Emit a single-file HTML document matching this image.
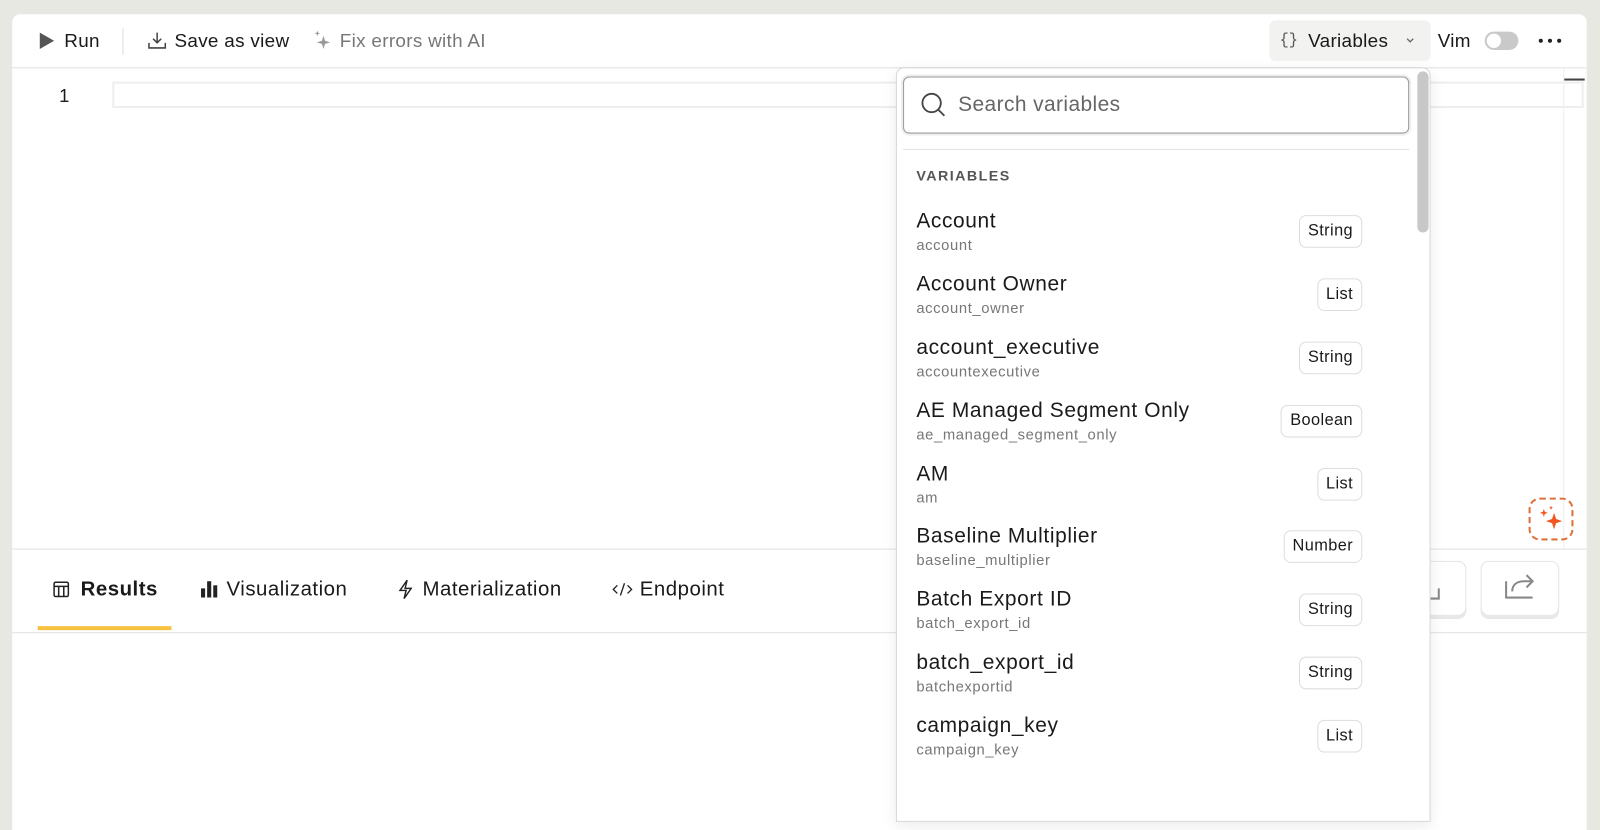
<!DOCTYPE html>
<html><head><meta charset="utf-8"><style>
*{box-sizing:border-box;margin:0;padding:0}
html,body{width:1600px;height:775px;overflow:hidden;background:#e8e8e3;font-family:"Liberation Sans",sans-serif;color:#1a1a1a}
#w{position:absolute;left:0;top:0;width:1568px;height:800px;transform:scale(1.0204,1.0197);transform-origin:0 0}
.a{position:absolute}
.card{left:12px;top:14px;width:1543px;height:800px;background:#fff;border-radius:8px 8px 0 0}
.tb{font-size:18.5px;top:29px;white-space:nowrap;letter-spacing:.3px}
.tab{font-size:20px;top:567px;white-space:nowrap;letter-spacing:.5px}
.name{font-size:20.5px;left:898px;letter-spacing:.6px;white-space:nowrap}
.sub{font-size:14.5px;color:#777;left:898px;letter-spacing:.6px;white-space:nowrap}
.badge{height:32px;border:1px solid #ddd;border-radius:7px;font-size:16px;padding:0 8px;line-height:30px;right:233px;letter-spacing:.4px}
</style></head><body><div id="w">
<div class="a card"></div>
<!-- toolbar -->
<div class="a" style="left:12px;top:66px;width:1543px;height:1px;background:#e2e2e2"></div>
<svg class="a" style="left:38px;top:31px" width="16" height="18"><path d="M1 1L15 9L1 17Z" fill="#555"/></svg>
<div class="a tb" style="left:63px">Run</div>
<div class="a" style="left:120px;top:28px;width:1px;height:26px;background:#ddd"></div>
<svg class="a" style="left:145px;top:31px" width="18" height="18" fill="none" stroke="#444" stroke-width="1.5"><path d="M9 1v10M5 7l4 4 4-4M1 11v5h16v-5"/></svg>
<div class="a tb" style="left:171px">Save as view</div>
<svg class="a" style="left:306px;top:29px" width="20" height="22" fill="#999"><path d="M11 6l1.5 5 5 1.5-5 1.5-1.5 5-1.5-5-5-1.5 5-1.5z"/><path d="M5 1l.7 2 2 .7-2 .7L5 6.5 4.3 4.4l-2-.7 2-.7z"/></svg>
<div class="a tb" style="left:333px;color:#777">Fix errors with AI</div>
<div class="a" style="left:1244px;top:20px;width:158px;height:40px;background:#f2f2f0;border-radius:6px"></div>
<div class="a tb" style="left:1254px;font-family:'Liberation Mono',monospace;font-size:15px;top:31px;color:#555;letter-spacing:0">{}</div>
<div class="a tb" style="left:1282px">Variables</div>
<svg class="a" style="left:1377px;top:36px" width="10" height="8" fill="none" stroke="#666" stroke-width="1.3"><path d="M2 2l3 3 3-3"/></svg>
<div class="a tb" style="left:1409px">Vim</div>
<div class="a" style="left:1455px;top:31px;width:33px;height:18px;background:#c9c9c9;border-radius:9px"></div>
<div class="a" style="left:1457px;top:33px;width:14px;height:14px;background:#fff;border-radius:50%"></div>
<div class="a" style="left:1508px;top:38px;width:4px;height:4px;background:#222;border-radius:50%;box-shadow:9px 0 #222,18px 0 #222"></div>
<!-- editor -->
<div class="a" style="left:58px;top:84px;font-size:18px">1</div>
<div class="a" style="left:110px;top:80px;width:1442px;height:26px;border:2px solid #eee"></div>
<div class="a" style="left:1532px;top:67px;width:1px;height:471px;background:#eee"></div>
<div class="a" style="left:1533px;top:77px;width:20px;height:2px;background:#444"></div>
<div class="a" style="left:1498px;top:488px;width:44px;height:42px;border:2px dashed #e0703a;border-radius:11px"></div>
<svg class="a" style="left:1506px;top:494px" width="30" height="30" fill="#f0561d"><path d="M17 9l2 6 6 2-6 2-2 6-2-6-6-2 6-2z"/><path d="M7 5l1 3 3 1-3 1-1 3-1-3-3-1 3-1z"/><path d="M14 2l.6 1.4 1.4.6-1.4.6L14 6l-.6-1.4L12 4l1.4-.6z"/></svg>
<div class="a" style="left:12px;top:538px;width:1543px;height:1px;background:#e2e2e2"></div>
<!-- tabs -->
<svg class="a" style="left:52px;top:570px" width="16" height="16" fill="none" stroke="#222" stroke-width="1.5"><rect x="1" y="1" width="14" height="14" rx="1.5"/><path d="M1 5h14M5.5 5v10M10.5 5v10"/></svg>
<div class="a tab" style="left:79px;font-weight:bold">Results</div>
<svg class="a" style="left:197px;top:569px" width="16" height="17" fill="#222"><rect x="0" y="8" width="4" height="9"/><rect x="6" y="1" width="4" height="16"/><rect x="12" y="5" width="4" height="12"/></svg>
<div class="a tab" style="left:222px">Visualization</div>
<svg class="a" style="left:390px;top:568px" width="14" height="20" fill="none" stroke="#222" stroke-width="1.4"><path d="M9 1L2 11h6l-2 8 7-10H7z"/></svg>
<div class="a tab" style="left:414px">Materialization</div>
<svg class="a" style="left:600px;top:571px" width="20" height="14" fill="none" stroke="#222" stroke-width="1.3"><path d="M5 3L1 7l4 4M15 3l4 4-4 4M12 1l-4 12"/></svg>
<div class="a tab" style="left:627px">Endpoint</div>
<div class="a" style="left:37px;top:614px;width:131px;height:4px;background:#f5c242"></div>
<div class="a" style="left:12px;top:620px;width:1543px;height:1px;background:#e2e2e2"></div>
<div class="a" style="left:1360px;top:550px;width:77px;height:54px;border:1px solid #e4e4e4;border-radius:8px;box-shadow:0 3px 0 #e8e8e8"></div>
<svg class="a" style="left:1390px;top:565px" width="30" height="26" fill="none" stroke="#888" stroke-width="2"><path d="M4 10l6 6M20 12v10h-9"/></svg>
<div class="a" style="left:1451px;top:550px;width:77px;height:54px;border:1px solid #e4e4e4;border-radius:8px;box-shadow:0 3px 0 #e8e8e8"></div>
<svg class="a" style="left:1473px;top:562px" width="34" height="28" fill="none" stroke="#888" stroke-width="2"><path d="M3 8v16h26M9 18c0-7 5-10 12-10h8M23 2l6 6-6 6"/></svg>
<!-- dropdown -->
<div class="a" style="left:878px;top:66px;width:524px;height:740px;background:#fff;border:1px solid #d8d8d8;border-radius:8px 8px 0 0;box-shadow:0 4px 14px rgba(0,0,0,.08)"></div>
<div class="a" style="left:885px;top:75px;width:496px;height:56px;border:1.5px solid #999;border-radius:6px;box-shadow:0 0 0 2px #eee"></div>
<svg class="a" style="left:902px;top:90px" width="26" height="26" fill="none" stroke="#444" stroke-width="1.8"><circle cx="11" cy="11" r="9"/><path d="M17.5 17.5l6 6"/></svg>
<div class="a" style="left:939px;top:91px;font-size:20.5px;color:#666;letter-spacing:.4px">Search variables</div>
<div class="a" style="left:885px;top:146px;width:496px;height:1px;background:#e2e2e2"></div>
<div class="a" style="left:898px;top:164px;font-size:14px;font-weight:bold;letter-spacing:1.4px;color:#555">VARIABLES</div>
<div class="a" style="left:1389px;top:70px;width:11px;height:158px;background:#c8c8c8;border-radius:6px"></div>

<div class="a name" style="top:205px">Account</div><div class="a sub" style="top:233px">account</div><div class="a badge" style="top:211px">String</div>
<div class="a name" style="top:267px">Account Owner</div><div class="a sub" style="top:295px">account_owner</div><div class="a badge" style="top:273px">List</div>
<div class="a name" style="top:329px">account_executive</div><div class="a sub" style="top:357px">accountexecutive</div><div class="a badge" style="top:335px">String</div>
<div class="a name" style="top:391px">AE Managed Segment Only</div><div class="a sub" style="top:419px">ae_managed_segment_only</div><div class="a badge" style="top:397px">Boolean</div>
<div class="a name" style="top:453px">AM</div><div class="a sub" style="top:481px">am</div><div class="a badge" style="top:459px">List</div>
<div class="a name" style="top:514px">Baseline Multiplier</div><div class="a sub" style="top:542px">baseline_multiplier</div><div class="a badge" style="top:520px">Number</div>
<div class="a name" style="top:576px">Batch Export ID</div><div class="a sub" style="top:604px">batch_export_id</div><div class="a badge" style="top:582px">String</div>
<div class="a name" style="top:638px">batch_export_id</div><div class="a sub" style="top:666px">batchexportid</div><div class="a badge" style="top:644px">String</div>
<div class="a name" style="top:700px">campaign_key</div><div class="a sub" style="top:728px">campaign_key</div><div class="a badge" style="top:706px">List</div>
</div></body></html>
